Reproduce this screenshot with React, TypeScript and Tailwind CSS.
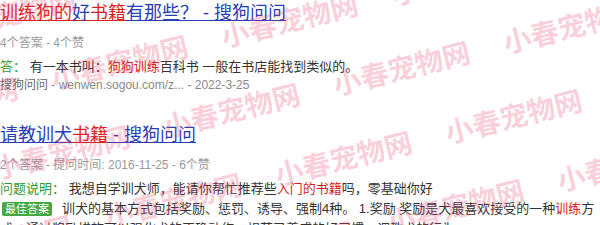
import React from "react";

const BLUE = "text-[#2a3db5]";

// tiled watermark lattice
const marks: { x: number; y: number }[] = [];
for (let i = -3; i <= 5; i++) {
  for (let j = -2; j <= 3; j++) {
    const x = 290 + i * 112 - j * 58;
    const y = 22 + i * 48 + j * 90;
    if (x > -90 && x < 690 && y > -40 && y < 265) marks.push({ x, y });
  }
}

function Watermark() {
  return (
    <div className="pointer-events-none absolute inset-0">
      {marks.map((m, k) => (
        <span
          key={k}
          className="absolute whitespace-nowrap text-[28px] leading-none font-bold text-[#e8436e]/25 -translate-x-1/2 -translate-y-1/2 -rotate-[14deg]"
          style={{ left: m.x, top: m.y }}
        >
          小春宠物网
        </span>
      ))}
    </div>
  );
}

export default function App() {
  return (
    <div className="relative w-[600px] h-[225px] overflow-hidden bg-white font-['Liberation_Sans','Noto_Sans_CJK_SC',sans-serif] text-[#333]">
      <div className="flex flex-col">
        {/* result 1 */}
        <a className="block text-[18px] leading-[26px] whitespace-nowrap">
          <span className="text-[#e01e1e] underline decoration-[#e01e1e]">训练狗的</span>
          <span className={`${BLUE} underline decoration-[#e01e1e]`}>好</span>
          <span className="text-[#e01e1e] underline decoration-[#e01e1e]">书籍</span>
          <span className={`${BLUE} underline decoration-[#2a3db5]`}>有那些？ - 搜狗问问</span>
        </a>
        <div className="mt-[10px] text-[12px] leading-[14px] text-[#9a9a9a]">4个答案 - 4个赞</div>
        <div className="mt-[7px] text-[13px] leading-[20px] whitespace-nowrap">
          <span className="text-[#2f9a2f]">答：</span> 有一本书叫：
          <span className="text-[#d61c1c]">狗狗训练</span>百科书 一般在书店能找到类似的。
        </div>
        <div className="text-[12px] leading-[16px] text-[#888]">
          <span className="text-[#666]">搜狗问问</span> - wenwen.sogou.com/z... - 2022-3-25
        </div>

        {/* result 2 */}
        <a className="mt-[29px] block text-[18px] leading-[26px] whitespace-nowrap">
          <span className={`${BLUE} underline decoration-[#2a3db5]`}>请教训犬</span>
          <span className="text-[#e01e1e] underline decoration-[#e01e1e]">书籍</span>
          <span className={`${BLUE} underline decoration-[#2a3db5]`}> - 搜狗问问</span>
        </a>
        <div className="mt-[10px] text-[12px] leading-[14px] text-[#9a9a9a]">
          2个答案 - 提问时间: 2016-11-25 - 6个赞
        </div>
        <div className="mt-[7px] text-[13px] leading-[20px] whitespace-nowrap">
          <span className="text-[#2f9a2f]">问题说明：</span> 我想自学训犬师，能请你帮忙推荐些
          <span className="text-[#d61c1c]">入门的书籍</span>吗，零基础你好
        </div>
        <div className="w-[600px] text-[13px] leading-[20px]">
          <span className="ml-[2px] mr-[10px] inline-block rounded-[2px] bg-[#43a843] px-[3px] text-[11px] leading-[14px] text-white">
            最佳答案
          </span>
          训犬的基本方式包括奖励、惩罚、诱导、强制4种。 1.奖励 奖励是犬最喜欢接受的一种
          <span className="text-[#d61c1c]">训练</span>方式，通过奖励措施可以强化犬的正确动作，规范已养成的好习惯，调教犬的行为。
        </div>
      </div>
      <Watermark />
    </div>
  );
}
